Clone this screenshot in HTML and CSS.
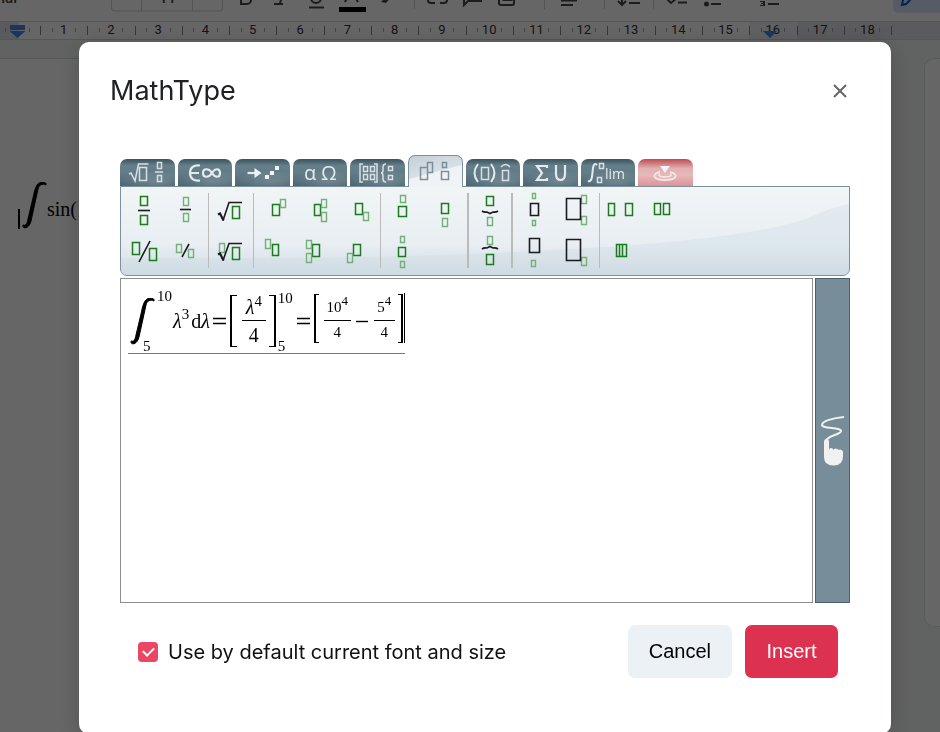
FILE: index.html
```html
<!DOCTYPE html>
<html lang="en">
<head>
<meta charset="utf-8">
<title>MathType</title>
<link rel="stylesheet" href="styles.css">
</head>
<body>
<div class="editor">
  <div class="toolbar">
    <svg class="tools" viewBox="0 0 940 22" preserveAspectRatio="xMinYMin slice" aria-hidden="true">
      <text x="-14" y="3" class="font-name">Arial</text>
      <text x="159" y="3" class="font-name">11</text>
      <path class="edge" d="M111.500 -5v13q0 3 3 3h105q3 0 3-3v-13M141.500 -5v16M192.500 -5v16M414.500 0v9M544.500 0v9M604.500 0v9M653.500 0v9"/>
      <path class="ink" d="M241 -6v10h6a4 4 0 0 0 0-8M274 4h9M280 3l3-9M309 7.500h15M311 -6v4a5 5 0 0 0 10 0v-4M345 2l6-12 7 12M348 -1h8M435 -3h-4a3 3 0 0 0 0 6h4M440 3h4a3 3 0 0 0 0-6h-4M464 -6v11l4-4h13v-7M499 -5v8a2 2 0 0 0 2 2h11a2 2 0 0 0 2-2v-8M561 0.500h16M561 5h12M622 -6v10M618 1l4 4 4-4M629 3h11M667-1l4 4 6-5M678 2.500h9M711 4h10M768 4h11"/>
      <path class="solid" d="M502 1l3-4 3 2 2-2 3 4zM704 4a2.300 2.300 0 1 0 5 0a2.300 2.300 0 1 0-5 0M760 1h5v5h-5v-1h3v-1h-2v-1h2v-1h-3zM381 2l7-7 3 2-5 6z"/>
      <path class="black" d="M339 7h27v5h-27z"/>
      <path class="mode" d="M893 -5h60v18h-54q-6 0-6-6z"/>
      <path class="pencil" d="M902 5l1-5 5-5 4 3-6 6z"/>
    </svg>
  </div>
  <div class="ruler">
    <div class="ruler-start"></div>
    <ol class="units">
      <li>1</li><li>2</li><li>3</li><li>4</li><li>5</li><li>6</li><li>7</li><li>8</li><li>9</li><li>10</li><li>11</li><li>12</li><li>13</li><li>14</li><li>15</li><li class="last">16<i class="marker"></i></li><li class="off">17</li><li class="off">18</li>
    </ol>
    <div class="ruler-end"></div>
  </div>
  <div class="desk">
    <div class="sheet">
      <div class="formula">
        <span class="cursor"></span>
        <svg class="integral" viewBox="130 293 25 47" aria-hidden="true"><path d="M131 337c0 3 6 3 8-5l7-32c1-4 4-6 8-4c1-3-5-5-9 0c-2 3-3 8-4 13l-5 21c-1 5-2 7-5 6z"/></svg>
        <span>sin(</span>
      </div>
    </div>
    <div class="side"></div>
  </div>
</div>

<div class="backdrop">
  <section class="dialog" role="dialog" aria-labelledby="dialog-title">
    <header class="head">
      <h1 id="dialog-title">MathType</h1>
      <button class="close" type="button" aria-label="Close"><svg viewBox="0 0 14 14"><path d="M1 1l12 12M13 1L1 13"/></svg></button>
    </header>

    <nav class="tabs" aria-label="Symbol groups">
      <button class="tab" type="button" aria-label="General"><svg viewBox="120 159 54 27"><path d="M129 174l2-1 4 8 3.500-17h10M139.500 167.500h7v13h-7zM157.500 162.500h4v6h-4zM155 172h8M157.500 175.500h4v6h-4z"/></svg></button>
      <button class="tab" type="button" aria-label="Symbols"><svg viewBox="178 159 54 27"><path class="heavy" d="M200 165.500c-6-1-10 2-10 7.500s4 8.500 10 7.500M190 173h9M212 173c-3-5-9-5-9 0s6 5 9 0s8-5 8 0s-5 5-8 0"/></svg></button>
      <button class="tab" type="button" aria-label="Arrows"><svg viewBox="235 159 54 27"><path class="heavy" d="M247.500 173h8"/><path class="fill" d="M254.500 168l7 5-7 5zM265 175h4v4h-4zM270 171h4v4h-4zM275 166h4v4h-4z"/></svg></button>
      <button class="tab" type="button" aria-label="Greek letters"><svg viewBox="293 159 54 27"><text x="304" y="180">α</text><text x="321" y="180">Ω</text></svg></button>
      <button class="tab" type="button" aria-label="Matrices"><svg viewBox="350 159 54 27"><path d="M363 164h-3v18h3M374 164h3v18h-3M363.500 166.500h4v5h-4zM370.500 166.500h4v5h-4zM363.500 174.500h4v5h-4zM370.500 174.500h4v5h-4zM386 164q-3 0-3 3v3q0 3-2 3q2 0 2 3v3q0 3 3 3M388.500 166.500h4v4h-4zM388.500 175.500h4v4h-4z"/></svg></button>
      <button class="tab active" type="button" aria-label="Scripts and layout"><svg viewBox="408 159 54 27"><path d="M420.500 168.500h7v12h-7zM427.500 163.500h5v10h-5zM442.500 163.500h4v5h-4zM441.500 172.500h7v8h-7z"/></svg></button>
      <button class="tab" type="button" aria-label="Brackets and accents"><svg viewBox="466 159 54 27"><path class="mid" d="M478 164q-7 9 0 18M491 164q7 9 0 18"/><path d="M481.500 167.500h7v12h-7zM501 167q4.500-5 9 0M502.500 170.500h6v10h-6z"/></svg></button>
      <button class="tab" type="button" aria-label="Big operators"><svg viewBox="523 159 54 27"><path class="heavy" d="M546 168v-2h-10l5 7-5 7h10v-2M555 165v9q0 6 4.500 6t4.500-6v-9"/></svg></button>
      <button class="tab" type="button" aria-label="Calculus"><svg viewBox="581 159 54 27"><path class="mid" d="M597 165q-3-3-4 3l-1 9q-1 5-4 4"/><path d="M599.500 163.500h4v5h-4zM597.500 177.500h4v5h-4z"/><text class="lim" x="605" y="179">lim</text></svg></button>
      <button class="tab input" type="button" aria-label="Download"><svg viewBox="638 159 54 27"><path class="fill" d="M659 166h10l-5 7z"/><path d="M659 172c-9 2-7 8 5 8s14-6 5-8M659 174c-3 2 1 3 5 3s8-1 5-3"/></svg></button>
    </nav>

    <div class="palette">
      <svg class="sheen" viewBox="0 0 728 88" preserveAspectRatio="none" aria-hidden="true"><path d="M0 71H180C420 68 630 55 690 30Q710 20 728 17V88H0z"/></svg>
      <div class="group">
        <button type="button" aria-label="Fraction"><svg viewBox="123 190 42 41"><path class="g" d="M140.500 196.500h7v9h-7zM140.500 215.500h7v9h-7z"/><path class="k" d="M138 210.500h12"/></svg></button>
        <button type="button" aria-label="Small fraction"><svg viewBox="165 190 42 41"><path class="l" d="M183.500 197.500h5v8h-5zM183.500 213.500h5v8h-5z"/><path class="k" d="M180 209.500h11"/></svg></button>
        <button type="button" aria-label="Bevelled fraction"><svg viewBox="123 231 42 41"><path class="g" d="M132.500 242.500h7v12h-7zM149.500 248.500h7v12h-7z"/><path class="k" d="M150 241l-11 21"/></svg></button>
        <button type="button" aria-label="Small bevelled fraction"><svg viewBox="165 231 42 41"><path class="l" d="M176.500 244.500h5v8h-5zM188.500 249.500h5v8h-5z"/><path class="k" d="M189 244l-7 13"/></svg></button>
      </div>
      <div class="group one">
        <button type="button" aria-label="Square root"><svg viewBox="210 190 42 41"><path class="g" d="M232.500 206.500h7v12h-7z"/><path class="k" d="M223 220.500l6-18h13"/><path class="tick" d="M218 214.500l2-1 3.500 7"/></svg></button>
        <button type="button" aria-label="Root"><svg viewBox="210 231 42 41"><path class="l" d="M219.500 243.500h5v9h-5z"/><path class="g" d="M232.500 247.500h7v12h-7z"/><path class="k" d="M223 260.500l6-17h13"/><path class="tick" d="M218 254.500l2-1 3.500 7"/></svg></button>
      </div>
      <div class="group three">
        <button type="button" aria-label="Superscript"><svg viewBox="254 190 42 41"><path class="g" d="M272.500 204.500h7v11h-7z"/><path class="l" d="M280.500 199.500h5v8h-5z"/></svg></button>
        <button type="button" aria-label="Subscript and superscript"><svg viewBox="296 190 42 41"><path class="g" d="M314.500 204.500h6v11h-6z"/><path class="l" d="M321.500 199.500h5v8h-5zM321.500 212.500h5v9h-5z"/></svg></button>
        <button type="button" aria-label="Subscript"><svg viewBox="338 190 42 41"><path class="g" d="M355.500 203.500h7v11h-7z"/><path class="l" d="M363.500 212.500h5v8h-5z"/></svg></button>
        <button type="button" aria-label="Left superscript"><svg viewBox="254 231 42 41"><path class="g" d="M272.500 244.500h6v11h-6z"/><path class="l" d="M265.500 239.500h5v9h-5z"/></svg></button>
        <button type="button" aria-label="Left subscript and superscript"><svg viewBox="296 231 42 41"><path class="g" d="M312.500 244.500h7v12h-7z"/><path class="l" d="M306.500 240.500h5v8h-5zM306.500 253.500h5v9h-5z"/></svg></button>
        <button type="button" aria-label="Left subscript"><svg viewBox="338 231 42 41"><path class="g" d="M353.500 244.500h7v11h-7z"/><path class="l" d="M347.500 253.500h5v9h-5z"/></svg></button>
      </div>
      <div class="group thick">
        <button type="button" aria-label="Element over"><svg viewBox="382 190 42 41"><path class="g" d="M398.500 206.500h8v10h-8z"/><path class="l" d="M400.500 195.500h5v7h-5z"/></svg></button>
        <button type="button" aria-label="Element under"><svg viewBox="424 190 42 41"><path class="g" d="M441.500 203.500h7v10h-7z"/><path class="l" d="M442.500 218.500h5v8h-5z"/></svg></button>
        <button type="button" aria-label="Element over and under"><svg viewBox="382 231 42 41"><path class="g" d="M398.500 247.500h7v9h-7z"/><path class="l" d="M400.500 236.500h4v6h-4zM400.500 261.500h4v6h-4z"/></svg></button>
      </div>
      <div class="group one thick tight">
        <button type="button" aria-label="Brace under"><svg viewBox="469 190 42 41"><path class="g" d="M486.500 196.500h7v9h-7z"/><path class="l" d="M487.500 217.500h5v8h-5z"/><path class="k" d="M482 211q2 1.500 5 1l3 1.500 3-1.500q3 .5 5-1"/></svg></button>
        <button type="button" aria-label="Brace over"><svg viewBox="469 231 42 41"><path class="g" d="M486.500 254.500h7v10h-7z"/><path class="l" d="M487.500 236.500h5v8h-5z"/><path class="k" d="M482 249q2-1.500 5-1l3-1.500 3 1.500q3-.5 5 1"/></svg></button>
      </div>
      <div class="group">
        <button type="button" aria-label="Big operator with limits"><svg viewBox="514 190 42 41"><path class="l" d="M532.500 193.500h3v5h-3zM532.500 220.500h3v5h-3z"/><path class="k" d="M530.500 203.500h8v12h-8z"/></svg></button>
        <button type="button" aria-label="Operator with side limits"><svg viewBox="556 190 42 41"><path class="l" d="M581.500 195.500h5v8h-5zM581.500 216.500h5v8h-5z"/><path class="k" d="M566.500 198.500h14v21h-14z"/></svg></button>
        <button type="button" aria-label="Big operator with lower limit"><svg viewBox="514 231 42 41"><path class="l" d="M531.500 260.500h4v6h-4z"/><path class="k" d="M529.500 238.500h10v14h-10z"/></svg></button>
        <button type="button" aria-label="Operator with side lower limit"><svg viewBox="556 231 42 41"><path class="l" d="M581.500 257.500h5v8h-5z"/><path class="k" d="M566.500 239.500h14v21h-14z"/></svg></button>
      </div>
      <div class="group last">
        <button type="button" aria-label="Wide space"><svg viewBox="601 190 42 41"><path class="g" d="M608.500 203.500h6v12h-6zM625.500 203.500h7v12h-7z"/></svg></button>
        <button type="button" aria-label="Thin space"><svg viewBox="643 190 42 41"><path class="g" d="M654.500 203.500h6v11h-6zM663.500 203.500h6v11h-6z"/></svg></button>
        <button type="button" aria-label="Negative space"><svg viewBox="601 231 42 41"><path class="g" d="M616.500 244.500h6v12h-6zM619.500 244.500h7v12h-7z"/></svg></button>
      </div>
    </div>

    <div class="work">
      <div class="canvas">
        <div class="eq">
          <svg class="integral" viewBox="130 293 25 47" aria-hidden="true"><path d="M131 337c0 3 6 3 8-5l7-32c1-4 4-6 8-4c1-3-5-5-9 0c-2 3-3 8-4 13l-5 21c-1 5-2 7-5 6z"/></svg>
          <span class="limits"><span class="upper">10</span><span>5</span></span>
          <span class="var"><i>λ</i><sup>3</sup></span>
          <span class="var"><span>d</span><i>λ</i></span>
          <svg class="op" viewBox="0 0 14 8"><path d="M0 1.500h13M0 6.500h13"/></svg>
          <span class="bracket left tall"></span>
          <span class="frac big"><span class="num"><i>λ</i><sup>4</sup></span><span class="den">4</span></span>
          <span class="bracket right tall"></span>
          <span class="limits after"><span>10</span><span>5</span></span>
          <svg class="op" viewBox="0 0 14 8"><path d="M0 1.500h13M0 6.500h13"/></svg>
          <span class="bracket left"></span>
          <span class="frac wide"><span class="num">10<sup>4</sup></span><span class="den">4</span></span>
          <svg class="op minus" viewBox="0 0 14 8"><path d="M1 4.500h12"/></svg>
          <span class="frac"><span class="num">5<sup>4</sup></span><span class="den">4</span></span>
          <span class="bracket right"></span>
          <span class="caret"></span>
        </div>
      </div>
      <button class="hand" type="button" aria-label="Handwriting"><svg viewBox="0 0 24 52"><path class="stroke" d="M23 2C12 3 1 6 1 10S20 12 20 16S6 20 5 26"/><path class="palm" d="M3 27q0-3 2.500-3t2.500 3v8q0-2 2-2t2.500 2q0-1.500 2.200-1.500T17 35q0-.5 2-.5t3 2v5q0 9-9.500 9T3 42z"/></svg></button>
    </div>

    <footer class="foot">
      <label class="check"><input type="checkbox" checked><span>Use by default current font and size</span></label>
      <button class="btn" type="button">Cancel</button>
      <button class="btn primary" type="button">Insert</button>
    </footer>
  </section>
</div>
</body>
</html>
```
FILE: styles.css
```css
* { box-sizing: border-box; }

body {
  margin: 0;
  overflow: hidden;
  font-family: Inter, "Liberation Sans", sans-serif;
}

button {
  margin: 0;
  padding: 0;
  border: 0;
  background: none;
  font: inherit;
  color: inherit;
}

svg { display: block; }

/* Document editor behind the dialog */
.editor {
  display: flex;
  flex-direction: column;
  height: 100vh;
  background: #f3f8f5;
}

.toolbar {
  height: 21px;
  overflow: hidden;
  background: #fff;
}

.tools { width: 100%; height: 22px; }
.font-name { font: 500 15px Roboto, sans-serif; fill: #444; }
.edge { fill: none; stroke: #d0d0d0; }
.ink { fill: none; stroke: #444746; stroke-width: 2; }
.solid { fill: #444746; }
.black { fill: #000; }
.mode { fill: #d8e4ff; }
.pencil { fill: none; stroke: #0b57d0; stroke-width: 2; }

.ruler {
  display: flex;
  height: 19px;
  border-top: 1px solid #d5d8da;
  border-bottom: 1px solid #d5d8da;
  font: 13px/16px Roboto, sans-serif;
  color: #333;
}

.ruler-start {
  position: relative;
  width: 40px;
  background: linear-gradient(#aaa, #aaa) 5px 6px / 1px 4px no-repeat,
    linear-gradient(#aaa, #aaa) 29px 6px / 1px 4px no-repeat,
    linear-gradient(90deg, #dfe3e8 19px, #fff 19px);
}

.ruler-start::after {
  content: "";
  position: absolute;
  left: 10px;
  top: 3px;
  width: 15px;
  height: 13px;
  background: linear-gradient(#4285f4, #4285f4) 0 0 / 15px 5px no-repeat,
    linear-gradient(#4285f4, #4285f4) 0 6px / 15px 7px no-repeat;
  clip-path: polygon(0 0, 100% 0, 100% 50%, 50% 100%, 0 50%);
}

.units {
  display: flex;
  flex: 1;
  margin: 0;
  padding: 0;
  list-style: none;
}

.units li {
  position: relative;
  flex: 1;
  text-align: center;
  background: linear-gradient(#888, #888) 0 4px / 1px 9px no-repeat,
    linear-gradient(#aaa, #aaa) 25% 6px / 1px 4px no-repeat,
    linear-gradient(#aaa, #aaa) 76% 6px / 1px 4px no-repeat,
    #fff;
}

.units .off { background-color: #dfe3e8; }
.units .last { background-color: #eff1f4; }

.marker {
  position: absolute;
  left: 14px;
  top: 9px;
  border: 7px solid transparent;
  border-top-color: #4285f4;
  border-bottom: 0;
}

.ruler-end {
  width: 49px;
  background: linear-gradient(#888, #888) 0 4px / 1px 9px no-repeat, #dfe3e8;
}

.desk {
  display: flex;
  flex: 1;
  justify-content: space-between;
  padding-top: 18px;
}

.sheet {
  flex: 1;
  margin-right: 33px;
  padding: 123px 18px;
  border-top: 1px solid #d8dcda;
  background: #fff;
}

.side {
  width: 16px;
  height: 569px;
  border: 1px solid #dde1df;
  border-right: 0;
  border-radius: 10px 0 0 10px;
  background: #fff;
}

.formula {
  display: flex;
  align-items: center;
  font: 20px/24px "Liberation Serif", serif;
}

.formula span:last-child { padding-top: 7px; }

.cursor {
  width: 2px;
  height: 20px;
  margin-right: 2px;
  align-self: flex-end;
  background: #000;
}

.integral {
  width: 25px;
  height: 47px;
  stroke: #000;
  stroke-width: 1;
}

/* Dialog */
.backdrop {
  position: fixed;
  inset: 0;
  padding: 42px 49px 0 79px;
  background: rgba(0, 0, 0, .6);
}

.dialog {
  padding: 29px 41px 56px;
  border-radius: 10px;
  background: #fff;
  box-shadow: 0 4px 24px rgba(0, 0, 0, .2);
}

.head {
  display: flex;
  align-items: center;
  justify-content: space-between;
  height: 40px;
  margin: 0 0 44px -10px;
}

h1 {
  margin: 0;
  font: 400 27px/40px Inter, sans-serif;
  color: #202124;
}

.close {
  display: grid;
  place-items: center;
  width: 20px;
  height: 38px;
}

.close svg { width: 14px; height: 14px; fill: none; stroke: #666; stroke-width: 2; }

.tabs {
  display: grid;
  grid-template-columns: repeat(10, 1fr);
  column-gap: 3px;
  align-items: end;
  width: 573px;
  max-width: 100%;
  height: 31px;
}

.tab {
  height: 27px;
  border-radius: 7px 7px 0 0;
  background: radial-gradient(ellipse 90% 55% at 65% 85%, rgba(255, 255, 255, .18), transparent 75%),
    linear-gradient(#39535f, #667f8a 25%, #617b86 55%, #4a636f);
}

.tab svg {
  width: 54px;
  height: 27px;
  margin: auto;
  fill: none;
  stroke: #d9dfe2;
  stroke-width: 1.5;
}

.tab .heavy { stroke-width: 2.2; stroke: #e6eaec; }
.tab .mid { stroke-width: 2; stroke: #e6eaec; }
.tab .fill { fill: #f2f4f5; stroke: none; }
.tab text { font: 20px "Open Sans", sans-serif; fill: #e6eaec; stroke: none; }
.tab .lim { font: 14px "Open Sans", sans-serif; }

.tab.active {
  z-index: 1;
  height: 32px;
  margin-bottom: -1px;
  border: 1px solid #7b919d;
  border-bottom: 0;
  background: linear-gradient(165deg, #c3d0d7, #d8e0e5 50%, #eff3f5 52%);
}

.tab.active svg { stroke: #7b8e99; margin-left: -1px; }
.tab.input { background: linear-gradient(#bb4c50, #e2b0b1 35%, #e5b9ba 60%, #dd9295); }
.tab.input svg { stroke: #f5e5e5; stroke-width: 1.8; }

.palette {
  position: relative;
  display: flex;
  padding: 3px 1px;
  border: 1px solid #7b919d;
  border-radius: 0 0 7px 7px;
  background: linear-gradient(#f1f5f6, #e8eef2 65%, #d3dee4);
}

.sheen {
  position: absolute;
  inset: 0;
  width: 100%;
  height: 100%;
  fill: rgba(190, 210, 225, .25);
}

.group {
  position: relative;
  display: grid;
  grid-template-columns: 42px 42px;
  padding: 0 1px;
  margin-right: 1px;
}

.group::after {
  content: "";
  position: absolute;
  top: 3px;
  bottom: 4px;
  left: 100%;
  width: 1px;
  background: #bbb;
}

.group.one { grid-template-columns: 42px; }
.group.three { grid-template-columns: 42px 42px 42px; padding: 0; }
.group.thick { margin-right: 2px; }
.group.thick::after { width: 2px; }
.group.tight { padding: 0; }
.group.last::after { display: none; }
.group button, .group svg { width: 42px; height: 41px; }
.group path { fill: none; }
.g { stroke: #1b7c1b; stroke-width: 1.5; }
.l { stroke: #75b078; stroke-width: 1.4; }
.k { stroke: #1b1b1f; stroke-width: 1.6; }
.tick { stroke: #1b1b1f; stroke-width: 2.2; }

.work {
  display: flex;
  gap: 2px;
  height: 325px;
  margin-top: 2px;
}

.canvas {
  flex: 1;
  padding: 10px 7px;
  border: 1px solid #8e8e8e;
}

.eq {
  display: inline-flex;
  align-items: center;
  height: 65px;
  padding-left: 2px;
  border-bottom: 1px solid #777;
  font: 20px/20px "Liberation Serif", serif;
}

.limits {
  display: flex;
  flex-direction: column;
  justify-content: space-between;
  width: 17px;
  height: 64px;
  margin-left: -12px;
  font-size: 15px;
  line-height: 14px;
}

.limits .upper { margin-left: 14px; }
.limits.after { margin: 0 1px 0 2px; padding: 2px 0 0; }
.limits + .var { margin-left: 13px; }
.var { margin-right: 2px; }
sup { font-size: 15px; line-height: 0; vertical-align: 9px; }

.op { width: 14px; height: 8px; margin: 0 1px; fill: none; stroke: #000; stroke-width: 1.4; }
.op.minus { margin: 0 5px 0 4px; }

.bracket {
  width: 5px;
  height: 49px;
  margin: 0 5px 6px 2px;
  border: solid #000;
  border-width: 1px 0 1px 2px;
}

.bracket.right { margin: 0 0 6px 3px; border-width: 1px 2px 1px 0; }
.bracket.tall { width: 7px; height: 52px; margin-bottom: 0; }

.frac { width: 21px; text-align: center; font-size: 15px; }
.frac span { display: block; height: 22px; line-height: 22px; white-space: nowrap; }
.frac .num { line-height: 16px; border-bottom: 1px solid #000; }
.frac.wide { width: 27px; }
.frac sup { font-size: 13px; vertical-align: 7px; }
.frac.big { width: 24px; font-size: 20px; }
.frac.big span { height: 27px; line-height: 29px; }
.frac.big .num { line-height: 26px; }
.frac.big sup { font-size: 15px; vertical-align: 8px; }

.caret { width: 1px; height: 50px; margin: 0 0 6px 1px; background: #000; }

.hand {
  width: 35px;
  border: 1px solid #4a626e;
  background: #778e9a;
}

.hand svg { width: 24px; height: 52px; margin: 0 auto 0 5px; }
.stroke { fill: none; stroke: #f1f1f1; stroke-width: 2; }
.palm { fill: #f1f1f1; }

.foot {
  display: flex;
  align-items: center;
  gap: 13px;
  margin-top: 22px;
  padding: 0 12px 0 18px;
}

.check {
  display: flex;
  align-items: center;
  gap: 10px;
  margin-right: auto;
  font-size: 20px;
  line-height: 24px;
  color: #111;
}

.check input {
  display: grid;
  place-items: center;
  width: 20px;
  height: 20px;
  margin: 0;
  appearance: none;
  border-radius: 4px;
  background: #eb4765;
}

.check input:checked::before {
  content: "";
  width: 9px;
  height: 5px;
  margin-bottom: 3px;
  border: solid #fff;
  border-width: 0 0 2px 2px;
  transform: rotate(-45deg);
}

.btn {
  min-width: 93px;
  height: 53px;
  padding: 0 21px 2px;
  border-radius: 7px;
  background: #ecf1f6;
  font: 20px/24px "Liberation Sans", sans-serif;
  color: #000;
}

.btn.primary { background: #dd3150; color: #fff; }
```
